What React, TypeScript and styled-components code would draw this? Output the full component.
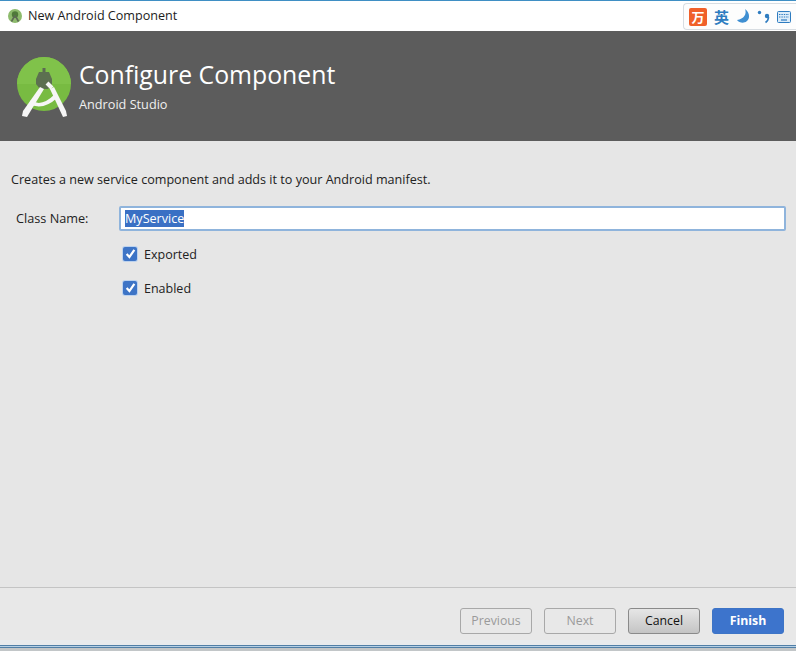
import React from 'react';
import styled, { createGlobalStyle } from 'styled-components';

const GlobalStyle = createGlobalStyle`
  html, body {
    margin: 0;
    padding: 0;
    background: #e6e6e6;
  }
  * { box-sizing: border-box; }
`;

const Window = styled.div`
  width: 796px;
  height: 651px;
  display: flex;
  flex-direction: column;
  position: relative;
  overflow: hidden;
  background: #e6e6e6;
  font-family: "Open Sans", "Noto Sans", sans-serif;
  color: #222;
`;

const TitleBar = styled.div`
  height: 31px;
  flex: none;
  display: flex;
  align-items: center;
  gap: 6px;
  padding: 0 0 1px 8px;
  background: #fff;
  border-top: 1px solid #3f8fc4;
  font-size: 12.6px;
  color: #1c1c1c;
`;

const ImeBar = styled.div`
  position: absolute;
  top: 3px;
  right: 0;
  width: 113px;
  height: 27px;
  display: flex;
  align-items: center;
  gap: 7px;
  padding-left: 5px;
  background: #fdfdfd;
  border: 1px solid #d8dde2;
  border-right: none;
  border-radius: 4px 0 0 4px;
`;

const ImeBadge = styled.div`
  width: 18px;
  height: 18px;
  flex: none;
  display: flex;
  align-items: center;
  justify-content: center;
  background: #f0602a;
  border-radius: 2px;
  color: #fff;
  font: bold 13px "Noto Sans CJK SC", sans-serif;
`;

const ImeLabel = styled.span`
  font: bold 15px "Noto Sans CJK SC", sans-serif;
  color: #2f7cc0;
  line-height: 1;
`;

const Banner = styled.header`
  height: 110px;
  flex: none;
  display: flex;
  align-items: center;
  gap: 8px;
  padding: 0 0 0 17px;
  background: #5c5c5c;
  color: #fff;
`;

const BannerText = styled.div`
  display: flex;
  flex-direction: column;
  gap: 5px;
  margin-top: -3px;
`;

const BannerTitle = styled.h1`
  margin: 0;
  font-size: 24.8px;
  font-weight: 400;
  line-height: 33px;
  color: #fff;
`;

const BannerSubtitle = styled.div`
  font-size: 12.7px;
  line-height: 16px;
  color: #f0f0f0;
`;

const Content = styled.main`
  flex: 1;
  display: flex;
  flex-direction: column;
  padding: 31px 10px 0 11px;
`;

const Description = styled.p`
  margin: 0;
  font-size: 12.6px;
  line-height: 16px;
`;

const FieldRow = styled.div`
  display: flex;
  align-items: center;
  margin-top: 18px;
  padding-left: 5px;
`;

const FieldLabel = styled.label`
  width: 103px;
  flex: none;
  padding-bottom: 2px;
  font-size: 12.7px;
`;

const NameInput = styled.div`
  flex: 1;
  height: 25px;
  display: flex;
  align-items: center;
  padding-left: 4px;
  background: #fff;
  border: 2px solid #8fb4dc;
  border-radius: 2px;
  font-size: 12.6px;
`;

const Selected = styled.span`
  background: #3a70c4;
  color: #fff;
  line-height: 17px;
`;

const CheckRow = styled.label<{ $first?: boolean }>`
  display: flex;
  align-items: center;
  gap: 7px;
  margin-top: ${(props) => (props.$first ? '14px' : '15px')};
  margin-left: 112px;
  height: 19px;
  font-size: 12.5px;
`;

const CheckBox = styled.span`
  width: 14px;
  height: 14px;
  flex: none;
  display: flex;
  align-items: center;
  justify-content: center;
  margin-top: -2px;
  background: #3d74c6;
  border-radius: 2px;
  box-shadow: 0 0 0 1px #bcd2ee;
`;

const Footer = styled.footer`
  height: 53px;
  flex: none;
  display: flex;
  justify-content: flex-end;
  gap: 12px;
  padding: 20px 12px 0 0;
  background: #e8e8e8;
  border-top: 1px solid #c4c4c4;
`;

const Button = styled.button<{ $variant?: 'disabled' | 'default' | 'primary' }>`
  width: 72px;
  height: 26px;
  padding: 0 0 2px;
  font-family: inherit;
  font-size: 12.3px;
  border-radius: 3px;
  border: 1px solid
    ${(props) =>
      props.$variant === 'primary'
        ? '#3d74c6'
        : props.$variant === 'default'
          ? '#8a8a8a'
          : '#a8a8a8'};
  background: ${(props) =>
    props.$variant === 'primary'
      ? '#3d74cc'
      : props.$variant === 'default'
        ? 'linear-gradient(#e6e6e6, #c4c4c4)'
        : 'transparent'};
  color: ${(props) =>
    props.$variant === 'primary'
      ? '#fff'
      : props.$variant === 'default'
        ? '#111'
        : '#9a9a9a'};
  font-weight: ${(props) => (props.$variant === 'primary' ? 700 : 400)};
`;

const BottomEdge = styled.div`
  height: 11px;
  flex: none;
  /* window frame of the dialog behind: pale band, two dark lines, grey */
  background: linear-gradient(
    #e8ebee 0 5px,
    #4f7fa8 5px 6px,
    #b5d0e6 6px 7px,
    #4f7fa8 7px 8px,
    #c2c6c8 8px
  );
`;

const SmallLogo = () => (
  <svg width="14" height="14" viewBox="0 0 14 14">
    <circle cx="7" cy="7" r="7" fill="#8dbb6c" />
    <circle cx="7" cy="5.5" r="3.2" fill="#4f7a3a" />
    <path d="M7 6v3M3.5 12.5L6 8M10.5 12.5L8 8" stroke="#5d6b55" strokeWidth="1.6" fill="none" />
  </svg>
);

const AndroidLogo = () => (
  <svg width="54" height="62" viewBox="0 0 54 62" style={{ marginTop: 4, flex: 'none' }}>
    <circle cx="27" cy="27" r="27" fill="#78bb42" />
    <path d="M0 27a27 27 0 0 1 54 0z" fill="#80c24a" />
    <path d="M27 11v5" stroke="#5c6a52" strokeWidth="3" />
    <path d="M22 15h10l3 7v5l-4 5h-8l-4-5v-5z" fill="#5c7050" />
    <path d="M23 30l4 2-17 28-5-1 1-5z" fill="#f6f6f6" />
    <path d="M33 32l4-2 12 24 1 5-4 1z" fill="#f6f6f6" />
    <path d="M14 43q10 8 24-6l2 4q-14 13-28 6z" fill="#f6f6f6" />
    <path d="M30 26l5 5" stroke="#f6f6f6" strokeWidth="4" />
  </svg>
);

const CheckMark = () => (
  <svg width="11" height="11" viewBox="0 0 10 10">
    <path d="M1.5 5.5l2.5 2.7 4.5-6.5" stroke="#fff" strokeWidth="2" fill="none" />
  </svg>
);

const MoonIcon = () => (
  <svg width="14" height="15" viewBox="0 0 14 15">
    <path d="M9 0c2 5-1 10-8 11 3 4 11 4 12-3 .3-3-1-6-4-8z" fill="#3f8fd2" />
  </svg>
);

const PunctIcon = () => (
  <svg width="13" height="14" viewBox="0 0 13 14">
    <circle cx="2.5" cy="2.5" r="1.7" fill="#2f7cc0" />
    <circle cx="10" cy="6" r="2.2" fill="#2f7cc0" />
    <path d="M11.5 7c0 3-1.5 4.5-3 5.5" stroke="#2f7cc0" strokeWidth="1.6" fill="none" />
  </svg>
);

const KeyboardIcon = () => (
  <svg width="14" height="12" viewBox="0 0 14 12">
    <rect x="0.5" y="0.5" width="13" height="11" rx="1" fill="#dcecf9" stroke="#2f7cc0" />
    <path
      d="M2 3.5h10M2 6h10"
      stroke="#2f7cc0"
      strokeWidth="1.2"
      strokeDasharray="1.4 1"
    />
    <path d="M4 9h6" stroke="#2f7cc0" strokeWidth="1.2" />
  </svg>
);

const App: React.FC = () => {
  return (
    <Window>
      <GlobalStyle />
      <TitleBar>
        <SmallLogo />
        <span>New Android Component</span>
      </TitleBar>
      <ImeBar>
        <ImeBadge>万</ImeBadge>
        <ImeLabel>英</ImeLabel>
        <MoonIcon />
        <PunctIcon />
        <KeyboardIcon />
      </ImeBar>
      <Banner>
        <AndroidLogo />
        <BannerText>
          <BannerTitle>Configure Component</BannerTitle>
          <BannerSubtitle>Android Studio</BannerSubtitle>
        </BannerText>
      </Banner>
      <Content>
        <Description>
          Creates a new service component and adds it to your Android manifest.
        </Description>
        <FieldRow>
          <FieldLabel>Class Name:</FieldLabel>
          <NameInput>
            <Selected>MyService</Selected>
          </NameInput>
        </FieldRow>
        <CheckRow $first>
          <CheckBox>
            <CheckMark />
          </CheckBox>
          Exported
        </CheckRow>
        <CheckRow>
          <CheckBox>
            <CheckMark />
          </CheckBox>
          Enabled
        </CheckRow>
      </Content>
      <Footer>
        <Button $variant="disabled">Previous</Button>
        <Button $variant="disabled">Next</Button>
        <Button $variant="default">Cancel</Button>
        <Button $variant="primary">Finish</Button>
      </Footer>
      <BottomEdge />
    </Window>
  );
};

export default App;
